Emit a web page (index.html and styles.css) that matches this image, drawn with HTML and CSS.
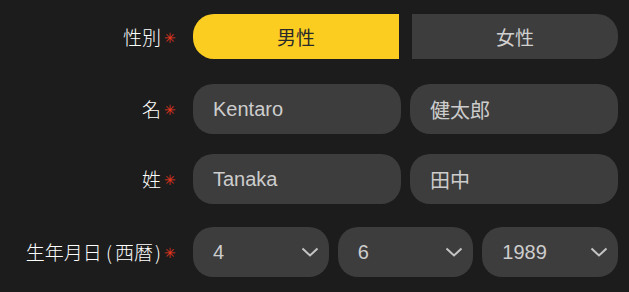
FILE: index.html
```html
<!DOCTYPE html>
<html lang="ja">
<head>
<meta charset="utf-8">
<title>Profile form</title>
<link rel="stylesheet" href="styles.css">
</head>
<body>
<form class="form">
  <div class="row row-gender">
    <div class="label"><span class="label-text">性別</span><span class="req">✳︎</span></div>
    <div class="fields gender">
      <button type="button" class="seg seg-left active">男性</button>
      <button type="button" class="seg seg-right">女性</button>
    </div>
  </div>
  <div class="row row-name">
    <div class="label"><span class="label-text">名</span><span class="req">✳︎</span></div>
    <div class="fields pair">
      <input class="field" type="text" value="Kentaro">
      <input class="field" type="text" value="健太郎">
    </div>
  </div>
  <div class="row row-surname">
    <div class="label"><span class="label-text">姓</span><span class="req">✳︎</span></div>
    <div class="fields pair">
      <input class="field" type="text" value="Tanaka">
      <input class="field" type="text" value="田中">
    </div>
  </div>
  <div class="row row-dob">
    <div class="label"><span class="label-text">生年月日 <span class="po">(</span>西暦<span class="pc">)</span></span><span class="req">✳︎</span></div>
    <div class="fields triple">
      <div class="select">
        <select><option>4</option></select>
        <svg class="chev" width="18" height="10" viewBox="0 0 18 10"><polyline points="1.5,1.5 9,8.5 16.5,1.5" fill="none" stroke="#c4c4c4" stroke-width="2"/></svg>
      </div>
      <div class="select">
        <select><option>6</option></select>
        <svg class="chev" width="18" height="10" viewBox="0 0 18 10"><polyline points="1.5,1.5 9,8.5 16.5,1.5" fill="none" stroke="#c4c4c4" stroke-width="2"/></svg>
      </div>
      <div class="select">
        <select><option>1989</option></select>
        <svg class="chev" width="18" height="10" viewBox="0 0 18 10"><polyline points="1.5,1.5 9,8.5 16.5,1.5" fill="none" stroke="#c4c4c4" stroke-width="2"/></svg>
      </div>
    </div>
  </div>
</form>
</body>
</html>
```

FILE: styles.css
```css
html, body {
  margin: 0;
  padding: 0;
  background: #1c1c1c;
}
body {
  width: 629px;
  height: 292px;
  overflow: hidden;
  font-family: "Liberation Sans", "Noto Sans CJK JP", sans-serif;
}
.form {
  display: flex;
  flex-direction: column;
  padding: 14px 11px 0 0;
}
.row {
  display: flex;
  align-items: center;
  gap: 18px;
}
.row-name { margin-top: 25px; }
.row-surname { margin-top: 20px; }
.row-dob { margin-top: 23px; }

.label {
  width: 175px;
  flex: none;
  display: flex;
  justify-content: flex-end;
  align-items: center;
  gap: 3px;
  color: #ffffff;
  font-family: "Noto Sans CJK JP", sans-serif;
  font-weight: 300;
  font-size: 19px;
  line-height: 24px;
}
.po { margin-right: 3px; }
.pc { margin-left: 2px; }
.req {
  color: #e8361e;
  font-family: "DejaVu Sans", sans-serif;
  font-weight: 400;
  font-size: 14px;
  line-height: 14px;
  width: 11px;
  text-align: center;
  margin-top: 2px;
}
.fields {
  flex: 1;
  display: flex;
}
.gender { gap: 13px; }
.pair, .triple { gap: 9px; }

.seg {
  flex: 1 1 0;
  width: 0;
  height: 45px;
  border: none;
  margin: 0;
  padding: 0;
  background: #3d3d3d;
  color: #d0d0d0;
  font-family: "Noto Sans CJK JP", sans-serif;
  font-size: 19px;
}
.seg-left { border-radius: 21px 0 0 21px; }
.seg-right { border-radius: 0 21px 21px 0; }
.seg.active {
  background: #fccd21;
  color: #2a2a2a;
}

.field {
  flex: 1 1 0;
  width: 0;
  min-width: 0;
  height: 50px;
  box-sizing: border-box;
  border: none;
  margin: 0;
  padding: 0 20px;
  border-radius: 20px;
  background: #3d3d3d;
  color: #cdcdcd;
  font-family: "Liberation Sans", "Noto Sans CJK JP", sans-serif;
  font-size: 20px;
  outline: none;
}

.select {
  flex: 1 1 0;
  width: 0;
  min-width: 0;
  height: 50px;
  box-sizing: border-box;
  display: flex;
  align-items: center;
  padding: 0 10px 0 20px;
  border-radius: 20px;
  background: #3d3d3d;
}
.select select {
  flex: 1;
  min-width: 0;
  appearance: none;
  -webkit-appearance: none;
  border: none;
  background: transparent;
  padding: 0;
  margin: 0;
  color: #cdcdcd;
  font-family: "Liberation Sans", sans-serif;
  font-size: 20px;
  outline: none;
}
.chev {
  flex: none;
  display: block;
}
```
